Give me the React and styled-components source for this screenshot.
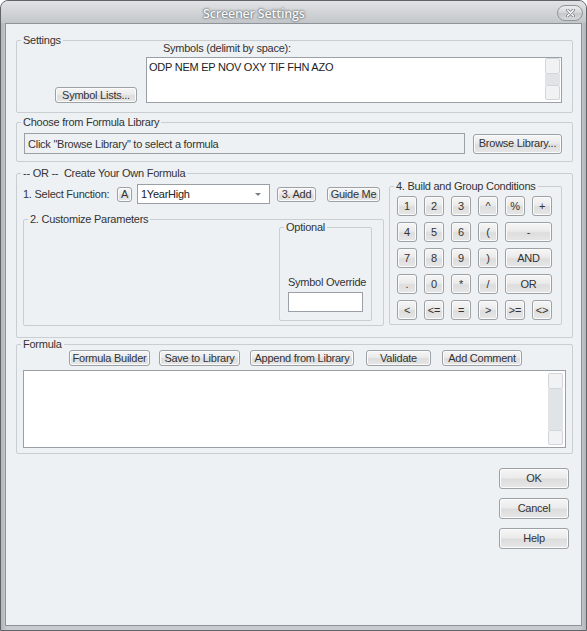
import styled, { createGlobalStyle } from 'styled-components'

const GlobalStyle = createGlobalStyle`
  html, body { margin: 0; padding: 0; background: #ffffff; }
  body {
    font-family: "Liberation Sans", Arial, sans-serif;
    font-size: 11px;
    letter-spacing: -0.25px;
    color: #333;
  }
  * { box-sizing: border-box; }
`

const Window = styled.div`
  width: 587px;
  height: 631px;
  display: flex;
  flex-direction: column;
  border: 1px solid #5f6469;
  border-radius: 8px 8px 0 0;
  overflow: hidden;
  background: #c4c8cc;
`

const TitleBar = styled.div`
  height: 22px;
  flex: none;
  display: flex;
  align-items: center;
  padding-left: 202px;
  padding-right: 3px;
  background: linear-gradient(#e2e3e4 0%, #d6d8da 35%, #c3c6c9 100%);
`

const Title = styled.span`
  font-family: "Open Sans", "Liberation Sans", sans-serif;
  font-size: 12.5px;
  font-weight: 600;
  letter-spacing: -0.2px;
  color: #f7f8f9;
  text-shadow: 0 0 1px #6a6f74, 0 0 2px #6a6f74, 0 0 3px #8a8f94;
  margin-top: 2px;
`

const CloseButton = styled.div`
  margin-left: auto;
  width: 26px;
  height: 16px;
  margin-top: 2px;
  border: 1px solid #8f9499;
  border-radius: 8px;
  background: linear-gradient(#eceded, #d3d5d8 50%, #c5c8cb 51%, #d6d8da);
  display: flex;
  align-items: center;
  justify-content: center;
`

const Frame = styled.div`
  flex: 1;
  display: flex;
  padding: 0 5px 4px 4px;
  background: linear-gradient(to right, #b2b6ba, #c8ccd0 1%, #c8ccd0 99%, #b2b6ba);
`

const Client = styled.div`
  flex: 1;
  display: flex;
  flex-direction: column;
  border: 1px solid #8e9399;
  background: #eef1f4;
  padding: 10px 8px 0 10px;
`

const Group = styled.fieldset`
  margin: ${p => p.$mt || 0}px 0 0 0;
  padding: 0;
  min-width: 0;
  border: 1px solid #c9ced3;
  border-radius: 2px;
`

const Legend = styled.legend`
  margin-left: 4px;
  padding: 0 2px;
  font-size: 11px;
  line-height: 12px;
  color: #333;
`

const Button = styled.button`
  font-family: "Liberation Sans", Arial, sans-serif;
  font-size: 11px;
  letter-spacing: -0.25px;
  color: #333;
  width: ${p => p.$w}px;
  height: ${p => p.$h || 20}px;
  padding: 0;
  flex: none;
  border: 1px solid #9ca1a6;
  border-radius: 3px;
  box-shadow: inset 0 0 0 1px #fbfbfb;
  background: linear-gradient(#f6f6f6 0%, #ebebeb 45%, #dddddd 55%, #e7e7e7 100%);
  line-height: 1;
  white-space: nowrap;
`

const TextBox = styled.div`
  display: flex;
  width: ${p => p.$w}px;
  height: ${p => p.$h}px;
  border: 1px solid #9aa0a6;
  background: #ffffff;
`

const TextContent = styled.div`
  flex: 1;
  padding: 2px 2px;
  font-size: 11px;
  line-height: 14px;
  color: #222;
`

const Scrollbar = styled.div`
  width: 15px;
  flex: none;
  display: flex;
  flex-direction: column;
  margin: ${p => p.$m};
`

const ScrollArrow = styled.div`
  height: ${p => p.$h}px;
  flex: none;
  border: 1px solid #d2d6da;
  border-radius: 2px;
  background: #f1f2f3;
`

const ScrollTrack = styled.div`
  flex: 1;
  background: #e1e4e7;
`

/* Settings */

const SettingsBody = styled.div`
  display: flex;
  align-items: flex-end;
  margin-top: -4px;
  padding: 0 9px 9px 38px;
`

const SymbolColumn = styled.div`
  display: flex;
  flex-direction: column;
  margin-left: 9px;
`

const SymbolLabel = styled.div`
  line-height: 12px;
  margin: 0 0 3px 17px;
`

/* Formula library */

const LibraryRow = styled.div`
  display: flex;
  align-items: center;
  gap: 8px;
  padding: 5px 9px 7px 7px;
`

const ReadOnlyField = styled.div`
  width: 441px;
  height: 21px;
  border: 1px solid #9aa0a6;
  background: #eef1f4;
  padding: 0 3px;
  display: flex;
  align-items: center;
`

/* Create your own */

const OrBody = styled.div`
  display: flex;
  align-items: flex-start;
  gap: 5px;
  padding: 0 9px 11px 6px;
`

const LeftColumn = styled.div`
  width: 361px;
  display: flex;
  flex-direction: column;
`

const SelectRow = styled.div`
  height: 20px;
  margin-top: 5px;
  display: flex;
  align-items: center;
`

const SelectLabel = styled.span`
  flex: none;
  width: 94px;
  white-space: nowrap;
`

const Combo = styled.div`
  width: 133px;
  height: 20px;
  flex: none;
  margin: 0 7px 0 5px;
  border: 1px solid #9aa0a6;
  background: #fff;
  display: flex;
  align-items: center;
  padding: 0 6px 0 3px;
`

const ComboText = styled.span`
  flex: 1;
  color: #222;
`

const ComboArrow = styled.span`
  width: 0;
  height: 0;
  border-left: 3px solid transparent;
  border-right: 3px solid transparent;
  border-top: 3px solid #7a7f84;
  margin-right: 2px;
`

const ParamsBody = styled.div`
  display: flex;
  justify-content: flex-end;
  margin-top: -4px;
  padding: 0 11px 4px 0;
`

const OptionalBody = styled.div`
  width: 91px;
  height: 87px;
  display: flex;
  flex-direction: column;
  justify-content: flex-end;
  padding: 0 0 8px 8px;
`

const OverrideLabel = styled.div`
  line-height: 12px;
  margin-bottom: 4px;
  white-space: nowrap;
`

const OverrideInput = styled.div`
  width: 75px;
  height: 20px;
  border: 1px solid #9aa0a6;
  background: #fff;
`

const Keypad = styled.div`
  display: grid;
  grid-template-columns: repeat(6, 20px);
  grid-auto-rows: 20px;
  column-gap: 7px;
  row-gap: 6px;
  padding: 4px 0 4px 7px;
  width: 171px;
`

const Key = styled(Button)`
  width: auto;
  height: 20px;
  grid-column: span ${p => p.$span || 1};
`

/* Formula */

const FormulaTools = styled.div`
  display: flex;
  padding-left: 52px;
`

const ToolButton = styled(Button)`
  margin-right: ${p => p.$mr}px;
`

const GuideButton = styled(Button)`
  margin-left: 11px;
`

const FormulaBody = styled.div`
  padding: 4px 6px 5px 6px;
`

const DialogButtons = styled.div`
  align-self: flex-end;
  display: flex;
  flex-direction: column;
  gap: 9px;
  margin: 14px 4px 0 0;
`

const keys = [
  ['1'], ['2'], ['3'], ['^'], ['%'], ['+'],
  ['4'], ['5'], ['6'], ['('], ['-', 2],
  ['7'], ['8'], ['9'], [')'], ['AND', 2],
  ['.'], ['0'], ['*'], ['/'], ['OR', 2],
  ['<'], ['<='], ['='], ['>'], ['>='], ['<>'],
]

const tools = [
  ['Formula Builder', 81, 9],
  ['Save to Library', 81, 10],
  ['Append from Library', 104, 12],
  ['Validate', 65, 11],
  ['Add Comment', 80, 0],
]

export default function App() {
  return (
    <>
      <GlobalStyle />
      <Window>
        <TitleBar>
          <Title>Screener Settings</Title>
          <CloseButton>
            <svg width="9" height="8" viewBox="0 0 9 8">
              <path d="M1.5 1 L7.5 7 M7.5 1 L1.5 7" stroke="#7f8489" strokeWidth="3" strokeLinecap="round" />
              <path d="M1.5 1 L7.5 7 M7.5 1 L1.5 7" stroke="#ffffff" strokeWidth="1.4" strokeLinecap="round" />
            </svg>
          </CloseButton>
        </TitleBar>
        <Frame>
          <Client>
            <Group>
              <Legend>Settings</Legend>
              <SettingsBody>
                <Button $w={82} $h={16}>Symbol Lists...</Button>
                <SymbolColumn>
                  <SymbolLabel>Symbols (delimit by space):</SymbolLabel>
                  <TextBox $w={416} $h={46}>
                    <TextContent>ODP NEM EP NOV OXY TIF FHN AZO</TextContent>
                    <Scrollbar $m="0 1px 2px 0">
                      <ScrollArrow $h={16} />
                      <ScrollTrack />
                      <ScrollArrow $h={15} />
                    </Scrollbar>
                  </TextBox>
                </SymbolColumn>
              </SettingsBody>
            </Group>

            <Group $mt={3}>
              <Legend>Choose from Formula Library</Legend>
              <LibraryRow>
                <ReadOnlyField>Click "Browse Library" to select a formula</ReadOnlyField>
                <Button $w={89} $h={20}>Browse Library...</Button>
              </LibraryRow>
            </Group>

            <Group $mt={5}>
              <Legend>-- OR --&nbsp;&nbsp;Create Your Own Formula</Legend>
              <OrBody>
                <LeftColumn>
                  <SelectRow>
                    <SelectLabel>1. Select Function:</SelectLabel>
                    <Button $w={15} $h={15}>A</Button>
                    <Combo>
                      <ComboText>1YearHigh</ComboText>
                      <ComboArrow />
                    </Combo>
                    <Button $w={39} $h={15}>3. Add</Button>
                    <GuideButton $w={53} $h={15}>Guide Me</GuideButton>
                  </SelectRow>
                  <Group $mt={9}>
                    <Legend>2. Customize Parameters</Legend>
                    <ParamsBody>
                      <Group>
                        <Legend>Optional</Legend>
                        <OptionalBody>
                          <OverrideLabel>Symbol Override</OverrideLabel>
                          <OverrideInput />
                        </OptionalBody>
                      </Group>
                    </ParamsBody>
                  </Group>
                </LeftColumn>
                <Group $mt={1}>
                  <Legend>4. Build and Group Conditions</Legend>
                  <Keypad>
                    {keys.map(([label, span], i) => (
                      <Key key={i} $span={span}>{label}</Key>
                    ))}
                  </Keypad>
                </Group>
              </OrBody>
            </Group>

            <Group>
              <Legend>Formula</Legend>
              <FormulaTools>
                {tools.map(([label, w, mr]) => (
                  <ToolButton key={label} $w={w} $h={16} $mr={mr}>{label}</ToolButton>
                ))}
              </FormulaTools>
              <FormulaBody>
                <TextBox $w={543} $h={78}>
                  <TextContent />
                  <Scrollbar $m="2px 2px 2px 0">
                    <ScrollArrow $h={16} />
                    <ScrollTrack />
                    <ScrollArrow $h={15} />
                  </Scrollbar>
                </TextBox>
              </FormulaBody>
            </Group>

            <DialogButtons>
              <Button $w={70} $h={21}>OK</Button>
              <Button $w={70} $h={21}>Cancel</Button>
              <Button $w={70} $h={21}>Help</Button>
            </DialogButtons>
          </Client>
        </Frame>
      </Window>
    </>
  )
}
